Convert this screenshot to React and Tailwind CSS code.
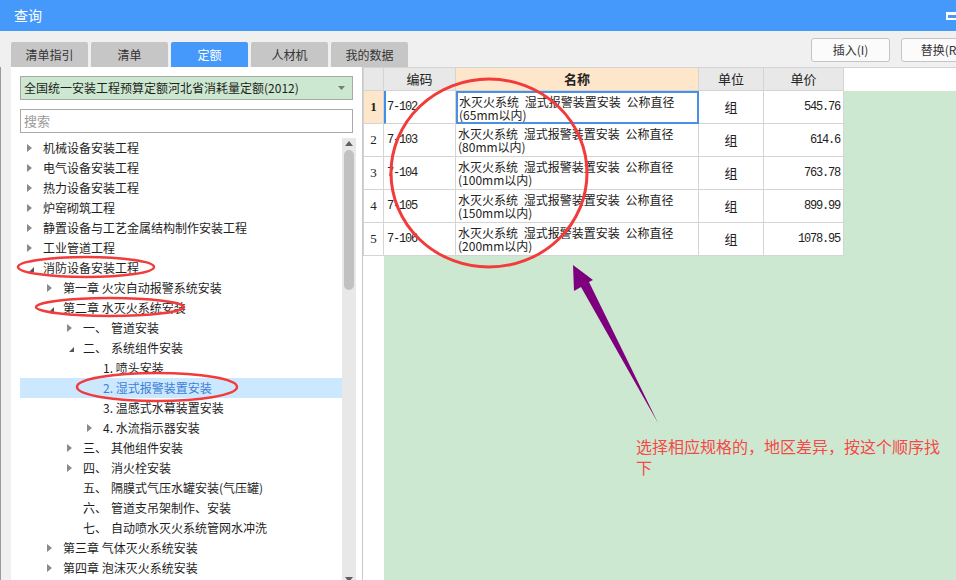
import React from 'react'

const TABS = ['清单指引', '清单', '定额', '人材机', '我的数据']

const TREE = [
  { lv: 0, arrow: 'r', text: '机械设备安装工程' },
  { lv: 0, arrow: 'r', text: '电气设备安装工程' },
  { lv: 0, arrow: 'r', text: '热力设备安装工程' },
  { lv: 0, arrow: 'r', text: '炉窑砌筑工程' },
  { lv: 0, arrow: 'r', text: '静置设备与工艺金属结构制作安装工程' },
  { lv: 0, arrow: 'r', text: '工业管道工程' },
  { lv: 0, arrow: 'd', text: '消防设备安装工程' },
  { lv: 1, arrow: 'r', text: '第一章 火灾自动报警系统安装' },
  { lv: 1, arrow: 'd', text: '第二章 水灭火系统安装' },
  { lv: 2, arrow: 'r', num: '一、', text: '管道安装' },
  { lv: 2, arrow: 'd', num: '二、', text: '系统组件安装' },
  { lv: 3, text: '1. 喷头安装' },
  { lv: 3, text: '2. 湿式报警装置安装', selected: true },
  { lv: 3, text: '3. 温感式水幕装置安装' },
  { lv: 3, arrow: 'r', text: '4. 水流指示器安装' },
  { lv: 2, arrow: 'r', num: '三、', text: '其他组件安装' },
  { lv: 2, arrow: 'r', num: '四、', text: '消火栓安装' },
  { lv: 2, num: '五、', text: '隔膜式气压水罐安装(气压罐)' },
  { lv: 2, num: '六、', text: '管道支吊架制作、安装' },
  { lv: 2, num: '七、', text: '自动喷水灭火系统管网水冲洗' },
  { lv: 1, arrow: 'r', text: '第三章 气体灭火系统安装' },
  { lv: 1, arrow: 'r', text: '第四章 泡沫灭火系统安装' },
]

const INDENT = ['pl-0', 'pl-[20px]', 'pl-[40px]', 'pl-[60px]']

const ROWS = [
  { code: '7-102', size: '(65mm以内)', price: '545.76' },
  { code: '7-103', size: '(80mm以内)', price: '614.6' },
  { code: '7-104', size: '(100mm以内)', price: '763.78' },
  { code: '7-105', size: '(150mm以内)', price: '899.99' },
  { code: '7-106', size: '(200mm以内)', price: '1078.95' },
]

const mono = "font-['Liberation_Mono',monospace] tracking-[-1.2px]"

function Arrow({ type }) {
  if (type === 'r') {
    return (
      <svg width="5" height="8" viewBox="0 0 5 8" className="ml-[7px]">
        <polygon points="0,0 5,4 0,8" fill="#8a8a8a" />
      </svg>
    )
  }
  if (type === 'd') {
    return (
      <svg width="5" height="5" viewBox="0 0 5 5" className="ml-[9px] mt-[2px]">
        <polygon points="5,0 5,5 0,5" fill="#555" />
      </svg>
    )
  }
  return null
}

function TreeRow({ item }) {
  return (
    <div
      className={`flex h-[20px] items-center whitespace-nowrap text-[12px] ${INDENT[item.lv]} ${
        item.selected ? 'bg-[#cce8ff] text-[#3c7fd6]' : 'text-[#1e1e1e]'
      }`}
    >
      <div className="flex w-[23px] shrink-0 items-center">
        <Arrow type={item.arrow} />
      </div>
      {item.num ? (
        <>
          <span>{item.num}</span>
          <span className="ml-[4px]">{item.text}</span>
        </>
      ) : (
        <span>{item.text}</span>
      )}
    </div>
  )
}

function Annotations() {
  return (
    <svg className="pointer-events-none absolute left-0 top-0" width="956" height="580" viewBox="0 0 956 580">
      <g fill="none" stroke="#f23b3b">
        <ellipse cx="489" cy="173" rx="98" ry="94" strokeWidth="3" />
        <ellipse cx="86" cy="267" rx="68" ry="10" strokeWidth="2.5" />
        <ellipse cx="110" cy="307" rx="74" ry="9" strokeWidth="2.5" />
        <ellipse cx="157" cy="387" rx="80" ry="14" strokeWidth="2.5" />
      </g>
      <polygon points="573,265 593,280 589,282 658,423 581,287 574,291" fill="#7d007d" />
    </svg>
  )
}

export default function App() {
  return (
    <div className="relative h-[580px] w-[956px] overflow-hidden bg-[#f0f0f0] font-['Noto_Sans_CJK_SC','Microsoft_YaHei',sans-serif]">
      <header className="flex h-[31px] items-center bg-[#4599fb] pl-[14px] text-[14px] text-white">
        <span>查询</span>
        <span className="ml-auto mr-[-3px] h-[8px] w-[13px] border-x-2 border-b-2 border-t-[3px] border-white" />
      </header>

      <div className="flex h-[36px] items-end pl-[11px]">
        <div className="flex gap-[3px]">
          {TABS.map((t) => (
            <div
              key={t}
              className={`flex h-[25px] w-[77px] items-center justify-center rounded-t-[2px] text-[12px] ${
                t === '定额' ? 'bg-[#4599fb] text-white' : 'bg-[#c6c6c6] text-[#333]'
              }`}
            >
              {t}
            </div>
          ))}
        </div>
        <div className="mb-[5px] ml-auto mr-[-24px] flex gap-[11px]">
          <button className="h-[24px] w-[79px] rounded-[3px] border border-[#c4c4c4] bg-[#fbfbfb] text-[12px] text-[#333]">插入(I)</button>
          <button className="h-[24px] w-[79px] rounded-[3px] border border-[#c4c4c4] bg-[#fbfbfb] text-[12px] text-[#333]">替换(R)</button>
        </div>
      </div>

      <div className="flex h-[513px] border-l border-[#9a9a9a]">
        <div className="ml-[10px] flex w-[351px] shrink-0 flex-col bg-white pt-[9px]">
          <div className="mx-[9px] flex h-[24px] items-center border border-[#a9a9a9] bg-[#cde8d0] pl-[3px] pr-[7px] text-[12px] text-[#1e1e1e]">
            <span>全国统一安装工程预算定额河北省消耗量定额(2012)</span>
            <svg width="7" height="4" viewBox="0 0 7 4" className="ml-auto">
              <polygon points="0,0 7,0 3.5,4" fill="#7a7a7a" />
            </svg>
          </div>
          <div className="mx-[9px] mt-[9px] flex h-[24px] items-center border border-[#a9a9a9] bg-white pl-[3px] text-[13px] text-[#9a9a9a]">
            搜索
          </div>
          <div className="mt-[5px] flex flex-1 overflow-hidden pl-[9px]">
            <div className="w-[322px] shrink-0">
              {TREE.map((item, i) => (
                <TreeRow key={i} item={item} />
              ))}
            </div>
            <div className="flex w-[14px] shrink-0 flex-col items-center bg-[#e8e8e8]">
              <svg width="8" height="5" viewBox="0 0 8 5" className="mt-[3px]">
                <polygon points="0,5 8,5 4,0" fill="#606060" />
              </svg>
              <div className="mt-[4px] h-[140px] w-[10px] rounded-full bg-[#c1c1c1]" />
              <svg width="8" height="5" viewBox="0 0 8 5" className="mt-auto mb-[-2px]">
                <polygon points="0,0 8,0 4,5" fill="#606060" />
              </svg>
            </div>
          </div>
        </div>

        <div className="w-px shrink-0 bg-[#c8c8c8]" />

        <div className="flex flex-1 flex-col bg-white">
          <div className="flex h-[24px] border-t border-[#d4d4d4] text-[13px] text-[#222]">
            <div className="w-[21px] border-x border-b border-[#d4d4d4] bg-[#e8e8e8]" />
            <div className="flex w-[72px] items-center justify-center border-b border-r border-[#d4d4d4] bg-[#e8e8e8]">编码</div>
            <div className="flex w-[243px] items-center justify-center border-b border-r border-[#d4d4d4] bg-[#fde6c9] font-bold">名称</div>
            <div className="flex w-[65px] items-center justify-center border-b border-r border-[#d4d4d4] bg-[#e8e8e8]">单位</div>
            <div className="flex w-[80px] items-center justify-center border-b border-r border-[#d4d4d4] bg-[#e8e8e8]">单价</div>
          </div>
          <div className="flex flex-1">
            <div className="w-[21px] shrink-0 bg-white">
              {ROWS.map((r, i) => (
                <div
                  key={r.code}
                  className={`flex h-[33px] items-center justify-center border-x border-b border-[#d4d4d4] font-['Liberation_Serif',serif] text-[13px] text-[#222] ${
                    i === 0 ? 'bg-[#fde6c9] font-bold' : 'bg-white'
                  }`}
                >
                  {i + 1}
                </div>
              ))}
            </div>
            <div className="flex-1 bg-[#cde8d0]">
              {ROWS.map((r, i) => (
                <div key={r.code} className="flex h-[33px] w-[460px] bg-white text-[12px] text-[#222]">
                  <div
                    className={`flex w-[72px] items-center border-b border-r border-[#d4d4d4] ${mono} ${
                      i === 0 ? 'border-l-2 border-l-[#3d8fe8] pl-[1px]' : 'pl-[3px]'
                    }`}
                  >
                    {r.code}
                  </div>
                  <div
                    className={`flex w-[243px] flex-col justify-center leading-[13px] [word-spacing:3px] ${
                      i === 0 ? 'border-2 border-[#4a90e2] pl-[1px]' : 'border-b border-r border-[#d4d4d4] pl-[2px]'
                    }`}
                  >
                    <span className="whitespace-nowrap">水灭火系统 湿式报警装置安装 公称直径</span>
                    <span className="whitespace-nowrap">{r.size}</span>
                  </div>
                  <div className="flex w-[65px] items-center justify-center border-b border-r border-[#d4d4d4] text-[13px]">组</div>
                  <div className={`flex w-[80px] items-center justify-end border-b border-r border-[#d4d4d4] pr-[3px] ${mono}`}>
                    {r.price}
                  </div>
                </div>
              ))}
              <div className="pl-[252px] pt-[180px] text-[16px] leading-[21px] text-[#f54848]">
                选择相应规格的，地区差异，按这个顺序找
                <br />
                下
              </div>
            </div>
          </div>
        </div>
      </div>

      <Annotations />
    </div>
  )
}
